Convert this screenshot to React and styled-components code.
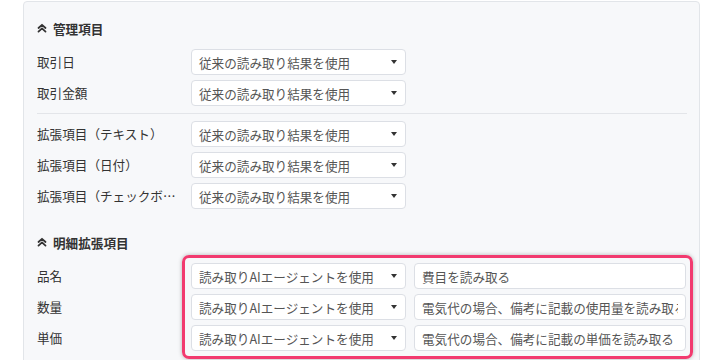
import styled, { createGlobalStyle } from "styled-components";

const GlobalStyle = createGlobalStyle`
  body {
    margin: 0;
    background: #ffffff;
    font-family: "Noto Sans CJK JP", "Noto Sans", sans-serif;
  }
`;

const basicRows = ["取引日", "取引金額"];
const extRows = ["拡張項目（テキスト）", "拡張項目（日付）", "拡張項目（チェックボックス）"];
const detailRows = [
  { label: "品名", prompt: "費目を読み取る" },
  { label: "数量", prompt: "電気代の場合、備考に記載の使用量を読み取る" },
  { label: "単価", prompt: "電気代の場合、備考に記載の単価を読み取る" },
];

function ChevronsUp() {
  return (
    <svg width="10" height="10" viewBox="0 0 10 10" fill="none">
      <path
        d="M1.5 5 L5 1.8 L8.5 5 M1.5 8.6 L5 5.4 L8.5 8.6"
        stroke="#333"
        strokeWidth="1.8"
        strokeLinecap="round"
        strokeLinejoin="round"
      />
    </svg>
  );
}

function Select({ value }) {
  return (
    <SelectBox>
      <span>{value}</span>
      <Caret />
    </SelectBox>
  );
}

export default function App() {
  return (
    <>
      <GlobalStyle />
      <Panel>
        <Heading>
          <ChevronsUp />
          <span>管理項目</span>
        </Heading>
        <Rows>
          {basicRows.map((label) => (
            <Row key={label}>
              <Label>{label}</Label>
              <Select value="従来の読み取り結果を使用" />
            </Row>
          ))}
        </Rows>
        <Divider />
        <Rows>
          {extRows.map((label) => (
            <Row key={label}>
              <Label title={label}>{label}</Label>
              <Select value="従来の読み取り結果を使用" />
            </Row>
          ))}
        </Rows>

        <Heading $top={24}>
          <ChevronsUp />
          <span>明細拡張項目</span>
        </Heading>
        <DetailArea>
          <LabelColumn>
            {detailRows.map((r) => (
              <Row key={r.label}>
                <Label>{r.label}</Label>
              </Row>
            ))}
          </LabelColumn>
          <Highlight>
            <Rows>
              {detailRows.map((r) => (
                <Row key={r.label}>
                  <Select value="読み取りAIエージェントを使用" />
                  <PromptInput readOnly value={r.prompt} />
                </Row>
              ))}
            </Rows>
          </Highlight>
        </DetailArea>
      </Panel>
    </>
  );
}

const Panel = styled.div`
  margin: 1px 0 0 23px;
  width: 677px;
  box-sizing: border-box;
  background: #f7f8fa;
  border: 1px solid #e2e5e9;
  border-radius: 4px;
  padding: 17px 12px 24px 13px;
  color: #333;
`;

const Heading = styled.div`
  display: flex;
  align-items: center;
  gap: 6px;
  height: 18px;
  margin-top: ${(p) => p.$top || 0}px;
  margin-bottom: 12px;
  font-size: 12.6px;
  font-weight: 700;
  color: #333;
`;

const Rows = styled.div`
  display: flex;
  flex-direction: column;
  gap: 5px;
`;

const Row = styled.div`
  display: flex;
  align-items: center;
  height: 26px;
  gap: 8px;
`;

const Label = styled.div`
  width: 144px;
  flex-shrink: 0;
  font-size: 12.6px;
  line-height: 18px;
  color: #333;
  white-space: nowrap;
  overflow: hidden;
  text-overflow: ellipsis;
`;

const LabelColumn = styled.div`
  width: 154px;
  flex-shrink: 0;
  display: flex;
  flex-direction: column;
  gap: 5px;
`;

const SelectBox = styled.div`
  width: 215px;
  height: 26px;
  box-sizing: border-box;
  flex-shrink: 0;
  display: flex;
  align-items: center;
  justify-content: space-between;
  padding: 0 8px 0 7px;
  margin-left: 2px;
  background: #fff;
  border: 1px solid #dcdfe5;
  border-radius: 4px;
  font-size: 12.6px;
  color: #555;
`;

const Caret = styled.span`
  width: 0;
  height: 0;
  border-left: 3.5px solid transparent;
  border-right: 3.5px solid transparent;
  border-top: 4px solid #333;
`;

const Divider = styled.div`
  height: 1px;
  background: #e3e5e9;
  margin: 7px 0;
`;

const DetailArea = styled.div`
  display: flex;
`;

const Highlight = styled.div`
  margin: -8px -6px 0 -9px;
  padding: 5px 4px 5px 6px;
  border: 3px solid #f23a6f;
  border-radius: 7px;
  box-shadow: 0 0 4px rgba(0, 0, 0, 0.28);
  flex: 1;

  ${SelectBox} {
    margin-left: 0;
  }
`;

const PromptInput = styled.input`
  flex: 1;
  min-width: 0;
  height: 26px;
  box-sizing: border-box;
  padding: 0 7px;
  background: #fff;
  border: 1px solid #dcdfe5;
  border-radius: 4px;
  font-family: "Noto Sans CJK JP", "Noto Sans", sans-serif;
  font-size: 12.6px;
  color: #555;
  outline: none;
`;
